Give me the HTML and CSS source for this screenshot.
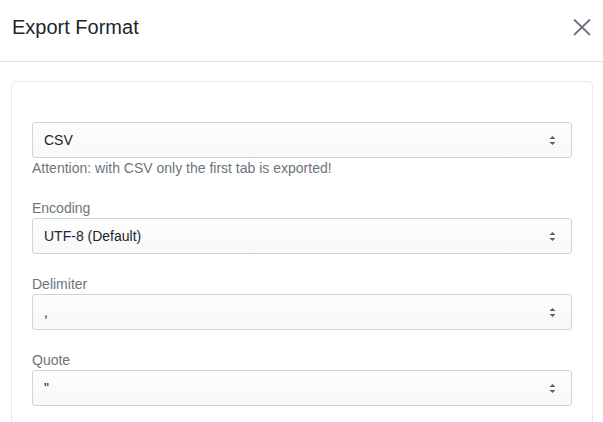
FILE: index.html
```
<!DOCTYPE html>
<html>
<head>
<meta charset="utf-8">
<link rel="stylesheet" href="styles.css">
</head>
<body>
<div class="modal">
  <div class="modal-header">
    <h5 class="modal-title">Export Format</h5>
    <button class="close" aria-label="Close">
      <svg width="18" height="18" viewBox="0 0 18 18"><path d="M1 1.5 L17 17 M17 1.5 L1 17" stroke="#6c757d" stroke-width="1.8" fill="none"/></svg>
    </button>
  </div>
  <div class="modal-body">
    <div class="card">
      <div class="form-group">
        <div class="select"><span>CSV</span><svg class="arrows" width="7" height="11" viewBox="0 0 7 11"><path d="M3.5 1 L6.5 4 L0.5 4 Z M0.5 7 L6.5 7 L3.5 10 Z" fill="#58616b"/></svg></div>
        <div class="help">Attention: with CSV only the first tab is exported!</div>
      </div>
      <div class="form-group">
        <label class="label">Encoding</label>
        <div class="select"><span>UTF-8 (Default)</span><svg class="arrows" width="7" height="11" viewBox="0 0 7 11"><path d="M3.5 1 L6.5 4 L0.5 4 Z M0.5 7 L6.5 7 L3.5 10 Z" fill="#58616b"/></svg></div>
      </div>
      <div class="form-group">
        <label class="label">Delimiter</label>
        <div class="select"><span>,</span><svg class="arrows" width="7" height="11" viewBox="0 0 7 11"><path d="M3.5 1 L6.5 4 L0.5 4 Z M0.5 7 L6.5 7 L3.5 10 Z" fill="#58616b"/></svg></div>
      </div>
      <div class="form-group">
        <label class="label">Quote</label>
        <div class="select"><span>"</span><svg class="arrows" width="7" height="11" viewBox="0 0 7 11"><path d="M3.5 1 L6.5 4 L0.5 4 Z M0.5 7 L6.5 7 L3.5 10 Z" fill="#58616b"/></svg></div>
      </div>
    </div>
  </div>
</div>
</body>
</html>
```
FILE: styles.css
```
* { box-sizing: border-box; }
html, body { margin: 0; padding: 0; background: #fff; }
body {
  font-family: "Liberation Sans", Arial, sans-serif;
  font-size: 14px;
  line-height: 20px;
  color: #212529;
  height: 422px;
  overflow: hidden;
}
.modal { width: 603px; }
.modal-header {
  height: 62px;
  border-bottom: 1px solid #dee2e6;
  display: flex;
  align-items: flex-start;
  justify-content: space-between;
  padding: 15px 12px 0 12px;
}
.modal-title {
  margin: 0;
  font-size: 20px;
  line-height: 24px;
  font-weight: normal;
  color: #212529;
}
.close {
  background: none;
  border: none;
  padding: 0;
  margin: 3px 0 0 0;
  width: 18px;
  height: 18px;
  display: block;
  cursor: pointer;
}
.close svg { display: block; }
.modal-body {
  padding: 19px 10px 0 11px;
}
.card {
  border: 1px solid #e9ecef;
  border-radius: 4px;
  padding: 40px 20px 30px 20px;
}
.form-group { margin-bottom: 20px; }
.form-group:last-child { margin-bottom: 0; }
.label {
  display: block;
  color: #6c757d;
  line-height: 20px;
}
.select {
  height: 36px;
  border: 1px solid #ced4da;
  border-radius: 3px;
  background: linear-gradient(#fdfdfe, #f7f8f9);
  display: flex;
  align-items: center;
  justify-content: space-between;
  padding: 0 15px 0 11px;
  color: #212529;
}
.arrows { display: block; }
.help {
  color: #6c757d;
  line-height: 20px;
}
```
